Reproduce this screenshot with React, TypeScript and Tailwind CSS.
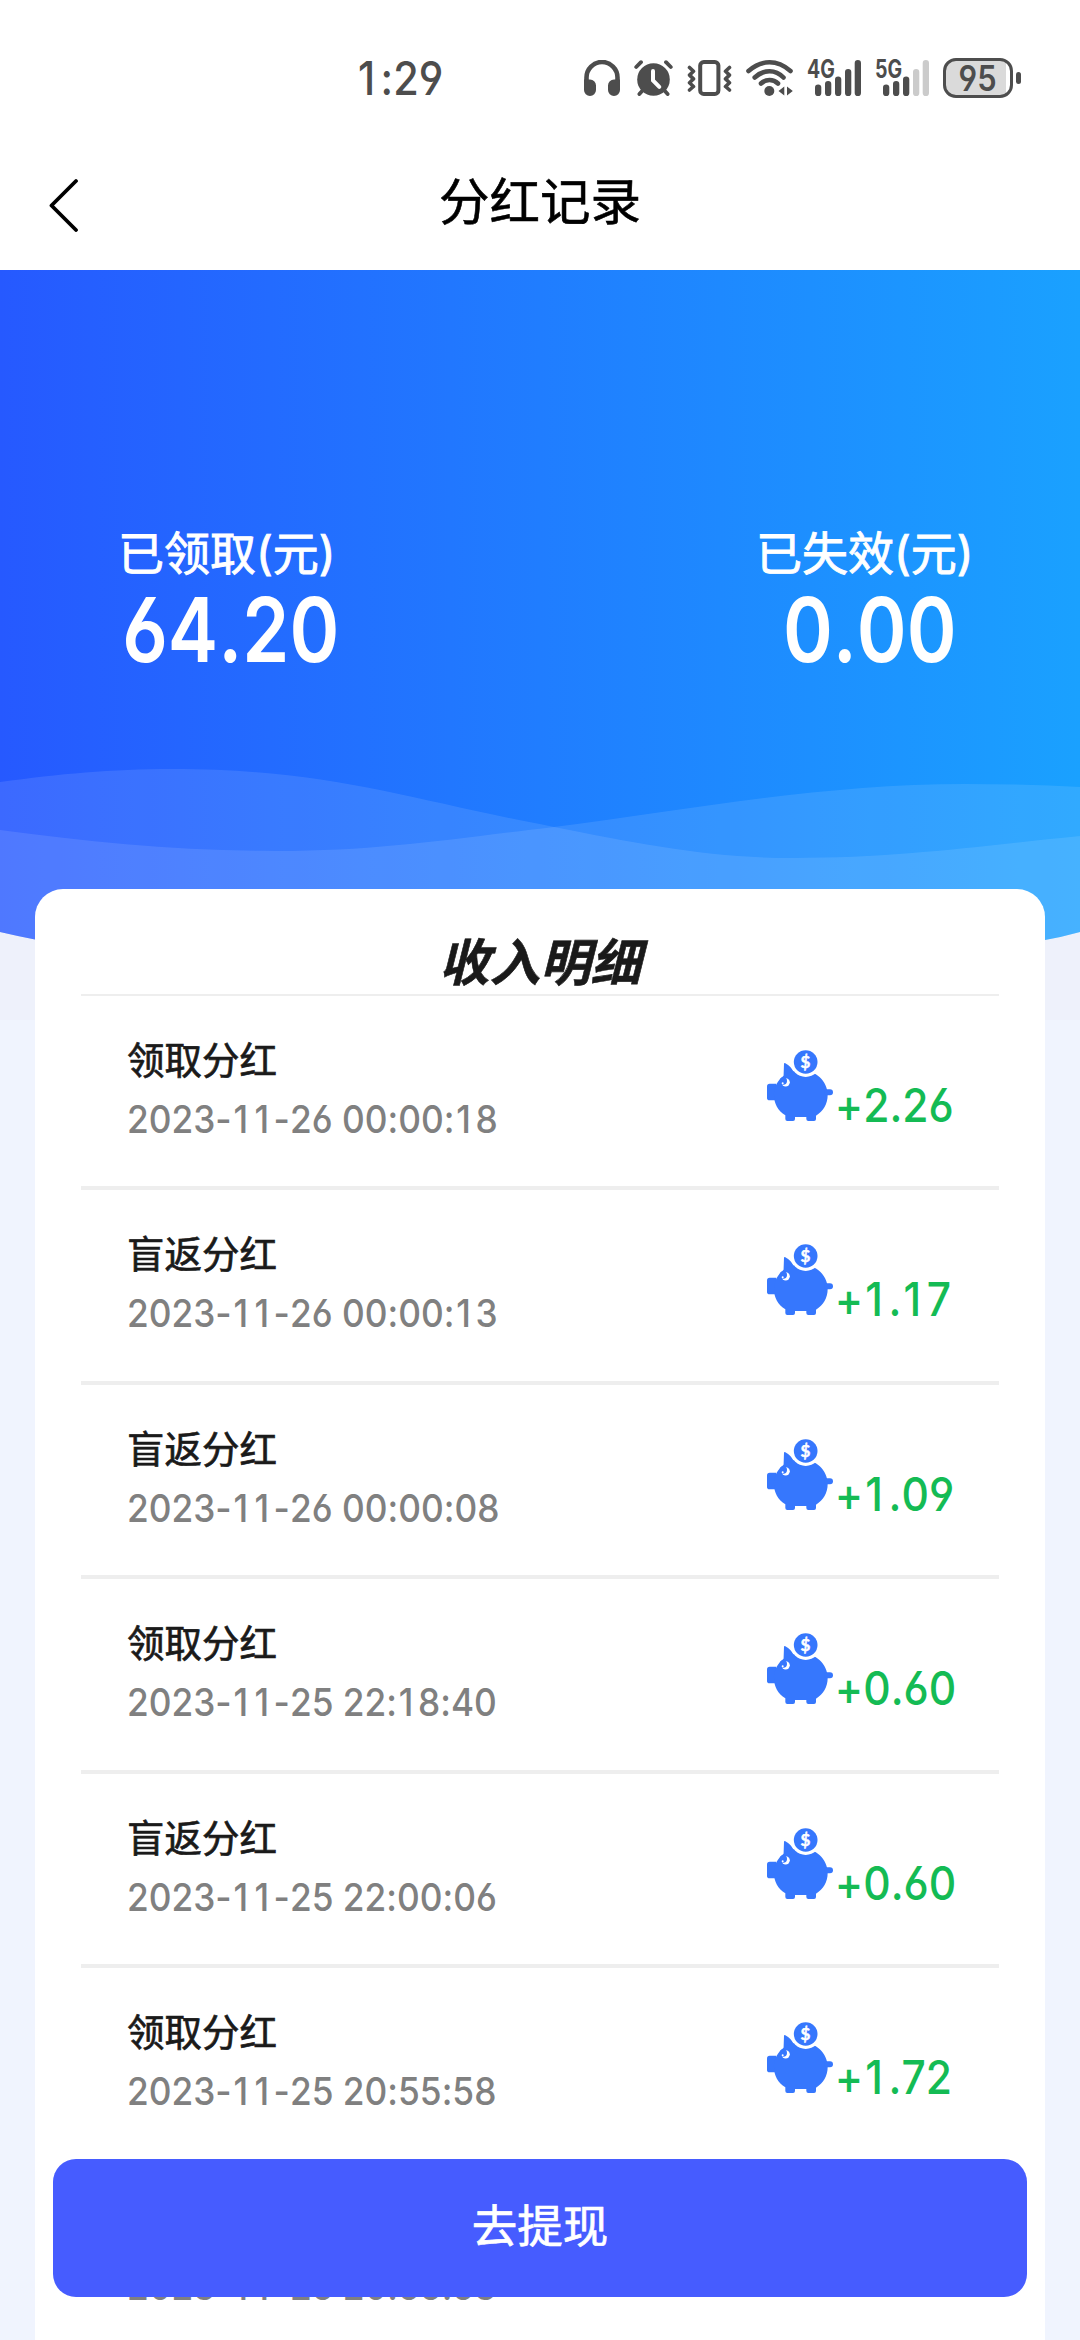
import React from "react";

type DividendRecord = {
  title: string;
  time: string;
  amount: string;
};

const records: DividendRecord[] = [
  { title: "领取分红", time: "2023-11-26 00:00:18", amount: "+2.26" },
  { title: "盲返分红", time: "2023-11-26 00:00:13", amount: "+1.17" },
  { title: "盲返分红", time: "2023-11-26 00:00:08", amount: "+1.09" },
  { title: "领取分红", time: "2023-11-25 22:18:40", amount: "+0.60" },
  { title: "盲返分红", time: "2023-11-25 22:00:06", amount: "+0.60" },
  { title: "领取分红", time: "2023-11-25 20:55:58", amount: "+1.72" },
  { title: "盲返分红", time: "2023-11-25 20:55:53", amount: "+0.85" },
];

// digits with the open 6 and 9
const numFont =
  "font-['Inter','Noto_Sans_CJK_SC',sans-serif] [font-feature-settings:'cv03','cv04','calt'_0] [font-kerning:none] whitespace-nowrap";

// Inter's "1" is narrow, pad it to the width of the other digits
function Digits({ value }: { value: string }) {
  return (
    <>
      {value.split(/(1)/).map((part, i) =>
        part === "1" ? (
          <span key={i} className="pr-[.13em] pl-[.05em]">
            1
          </span>
        ) : (
          part
        )
      )}
    </>
  );
}

function SignalBars({ label, active }: { label: string; active: number }) {
  const bars = [
    { x: 8, y: 24.5 },
    { x: 18, y: 21 },
    { x: 28, y: 16.5 },
    { x: 38, y: 9 },
    { x: 47.7, y: 0 },
  ];
  return (
    <div className="relative w-[55px] h-9">
      <span className="absolute -top-[3px] left-0 origin-left scale-x-[.78] text-[25px] leading-6 font-bold font-['Inter',sans-serif]">
        {label}
      </span>
      <svg className="absolute inset-0" width="55" height="36" viewBox="0 0 55 36">
        {bars.map((b, i) => (
          <rect
            key={i}
            x={b.x}
            y={b.y}
            width="6.3"
            height={36 - b.y}
            rx="3.1"
            fill={i < active ? "#4d4d4d" : "#cbcbcb"}
          />
        ))}
      </svg>
    </div>
  );
}

function StatusBar() {
  return (
    <div className="flex items-start h-[140px] pt-[60px] pl-[356px] text-[#4d4d4d]">
      <div className="w-[228px] h-9 flex items-center">
        <span
          className={`${numFont} origin-left scale-x-[.9] text-[46px] leading-9 font-medium`}
        >
          <Digits value="1:29" />
        </span>
      </div>
      <svg width="36" height="36" viewBox="0 0 36 36">
        <path
          d="M2.5 24V17.5a15.5 15.5 0 0 1 31 0V24"
          fill="none"
          stroke="currentColor"
          strokeWidth="4.6"
        />
        <path
          d="M0 19.5h6a6 6 0 0 1 6 6V30a6 6 0 0 1-12 0zM36 19.5h-6a6 6 0 0 0-6 6V30a6 6 0 0 0 12 0z"
          fill="currentColor"
        />
      </svg>
      <svg className="ml-[14px]" width="39" height="36" viewBox="0 0 39 36">
        <g stroke="currentColor" strokeWidth="3.8" strokeLinecap="round">
          <path d="M2.2 7L7 2.2M36.8 7L32 2.2M9 30l-3.6 4M30 30l3.6 4" />
        </g>
        <circle cx="19.5" cy="19.5" r="16.3" fill="currentColor" />
        <path
          d="M19 11v9.5l6.3 6.3"
          fill="none"
          stroke="#fff"
          strokeWidth="4"
          strokeLinecap="round"
        />
      </svg>
      <svg className="ml-[14px]" width="45" height="36" viewBox="0 0 45 36">
        <g fill="none" stroke="currentColor">
          <rect x="13.2" y="2" width="18.2" height="32" rx="3.6" strokeWidth="4" />
          <path
            d="M2.5 7.5l4 3.8-4 3.8 4 3.8-4 3.8 4 3.8-4 3.5M42.5 7.5l-4 3.8 4 3.8-4 3.8 4 3.8-4 3.8 4 3.5"
            strokeWidth="3.6"
            strokeLinecap="round"
            strokeLinejoin="round"
          />
        </g>
      </svg>
      <svg className="ml-[14px]" width="47" height="36" viewBox="0 0 47 36">
        <g fill="none" stroke="currentColor" strokeWidth="4.6" strokeLinecap="round">
          <path d="M2.5 11Q12.5 2.3 23.5 2.3T44.5 11" />
          <path d="M8.7 17.5Q15.5 11.2 23.5 11.2T37.5 17.5" />
          <path d="M15 23.5Q18.5 20 23.5 20T32 23.5" />
        </g>
        <circle cx="23.3" cy="31" r="5" fill="currentColor" />
        <path d="M38.3 26.5v9l-5.8-4.5zM41 26.5v9l5.8-4.5z" fill="currentColor" />
      </svg>
      <div className="ml-[14px]">
        <SignalBars label="4G" active={5} />
      </div>
      <div className="ml-[13px]">
        <SignalBars label="5G" active={3} />
      </div>
      <div className="flex items-center ml-[13px] -mt-[2px]">
        <div className="w-[70px] h-10 rounded-[13px] border-[3px] border-[#4d4d4d] bg-[linear-gradient(90deg,#dadada_60px,#fff_60px)] flex items-center justify-center">
          <span className={`${numFont} text-[35px] leading-8 font-semibold scale-x-[.88]`}>
            95
          </span>
        </div>
        <div className="w-[5px] h-3 ml-[3px] rounded-[2.5px] bg-[#4d4d4d]" />
      </div>
    </div>
  );
}

function PiggyIcon() {
  return (
    <svg className="shrink-0" width="66" height="71" viewBox="19 30 198 213">
      <g fill="#3677fd">
        <path d="M70 71q1-3 4-1c12 7 20 16 24 24l-30 34z" />
        <path d="M27 131h20v50H27q-8 0-8-8v-34q0-8 8-8z" />
        <path d="M121 91c44 0 80 32 80 74 0 27-13 48-35 62v10q0 6-6 6h-17q-6 0-6-6v-6h-34v6q0 6-6 6H80q-6 0-6-6v-11c-22-14-34-35-34-61 0-42 36-74 81-74z" />
        <rect x="190" y="148" width="27" height="18" rx="9" />
      </g>
      <circle cx="135" cy="66" r="45" fill="#fff" />
      <circle cx="135" cy="66" r="35.5" fill="#3677fd" />
      <circle cx="75" cy="127" r="12.5" fill="#fff" />
      <circle cx="68" cy="123" r="11" fill="#3677fd" />
      <circle cx="66" cy="130" r="3" fill="#fff" />
      <text
        x="134.5"
        y="84"
        textAnchor="middle"
        fill="#fff"
        stroke="#fff"
        strokeWidth="1.5"
        fontSize="51"
        fontWeight="700"
        fontFamily="Lato, sans-serif"
      >
        $
      </text>
    </svg>
  );
}

function Waves() {
  return (
    <svg
      className="absolute top-0 left-0"
      width="1080"
      height="750"
      viewBox="0 0 1080 750"
    >
      <defs>
        <linearGradient id="heroFill" x1="0" x2="1" y1="0" y2="0">
          <stop offset="0" stopColor="#2659ff" />
          <stop offset="0.5" stopColor="#207dff" />
          <stop offset="1" stopColor="#1aa1ff" />
        </linearGradient>
        <clipPath id="heroClip">
          <path d="M0 0H1080V662Q1062 667 1045 670Q540 780 35 669.5Q17 666 0 662Z" />
        </clipPath>
      </defs>
      <rect width="1080" height="750" fill="#eef1fb" />
      <g clipPath="url(#heroClip)">
        <rect width="1080" height="750" fill="url(#heroFill)" />
        <path
          d="M0 512C60 504 110 499 172 499C330 499 410 530 554 557C640 574 710 588 792 588C900 588 980 576 1080 566V750H0Z"
          fill="#fff"
          fillOpacity="0.1"
        />
        <path
          d="M0 560C90 572 180 581 276 581C380 581 450 569 554 557C680 541 820 514 965 514C1005 514 1045 515 1080 517V750H0Z"
          fill="#fff"
          fillOpacity="0.1"
        />
      </g>
    </svg>
  );
}

function Stat({ label, value, indent }: { label: string; value: string; indent: string }) {
  return (
    <div className="w-[222px]">
      <p className="text-[46px] leading-[66px] font-['Inter','Noto_Sans_CJK_SC',sans-serif] whitespace-nowrap [-webkit-text-stroke:.9px_#fff]">
        {label}
      </p>
      <p
        className={`${numFont} ${indent} text-[90px] leading-[88px] font-[560] origin-left scale-x-[.84]`}
      >
        {value}
      </p>
    </div>
  );
}

function RecordRow({ record }: { record: DividendRecord }) {
  return (
    <li className="flex justify-between h-[194.45px] border-b-4 border-[#eee] pl-[46px] pr-[47px]">
      <div className="pt-[35px]">
        <p className="text-[37.5px] leading-[54px] text-[#1a1a1a] [-webkit-text-stroke:.7px_#1a1a1a]">
          {record.title}
        </p>
        <p
          className={`${numFont} mt-[7px] text-[38.5px] leading-[54px] font-[480] text-[#808080] origin-left scale-x-[.916]`}
        >
          <Digits value={record.time} />
        </p>
      </div>
      <div className="flex pt-[54px]">
        <PiggyIcon />
        <span
          className={`${numFont} w-[119px] pl-[2px] mt-[28px] text-[46.5px] leading-[54px] font-[520] text-[#14bb54] origin-left scale-x-[.915]`}
        >
          <Digits value={record.amount} />
        </span>
      </div>
    </li>
  );
}

export default function App() {
  return (
    <div className="relative flex flex-col w-[1080px] h-[2340px] overflow-hidden bg-[#f0f4fe] font-['Noto_Sans_CJK_SC',sans-serif]">
      <header className="h-[270px] shrink-0 bg-white">
        <StatusBar />
        <div className="grid grid-cols-3 items-center h-[124px] px-12">
          <svg className="mt-[5px]" width="32" height="54" viewBox="0 0 32 54">
            <path
              d="M28 3L3.5 27.5L28 52"
              fill="none"
              stroke="#000"
              strokeWidth="3.8"
              strokeLinecap="round"
              strokeLinejoin="round"
            />
          </svg>
          <h1 className="-mt-2 text-center text-[50.5px] leading-[60px] text-black [-webkit-text-stroke:.6px_#000]">
            分红记录
          </h1>
        </div>
      </header>

      <section className="relative h-[619px] shrink-0 text-white">
        <Waves />
        <div className="relative flex justify-between pt-[250px] pl-[118px] pr-[102px]">
          <Stat label="已领取(元)" value="64.20" indent="pl-[5px]" />
          <Stat label="已失效(元)" value="0.00" indent="pl-[32px]" />
        </div>
      </section>

      <main className="relative mx-[35px] h-[1500px] shrink-0 rounded-t-[28px] bg-white px-[46px]">
        <h2 className="h-[107px] pt-[38px] border-b-2 border-[#eee] text-center text-[50.5px] leading-[64px] font-bold italic text-[#1a1a1a] [-webkit-text-stroke:.6px_#1a1a1a]">
          收入明细
        </h2>
        <ul>
          {records.map((record) => (
            <RecordRow key={record.time} record={record} />
          ))}
        </ul>
      </main>

      <button className="absolute left-[53px] top-[2159px] w-[974px] h-[138px] pb-[9px] rounded-[23px] bg-[#465cff] text-center text-[45.5px] text-white [-webkit-text-stroke:.7px_#fff]">
        去提现
      </button>
    </div>
  );
}
